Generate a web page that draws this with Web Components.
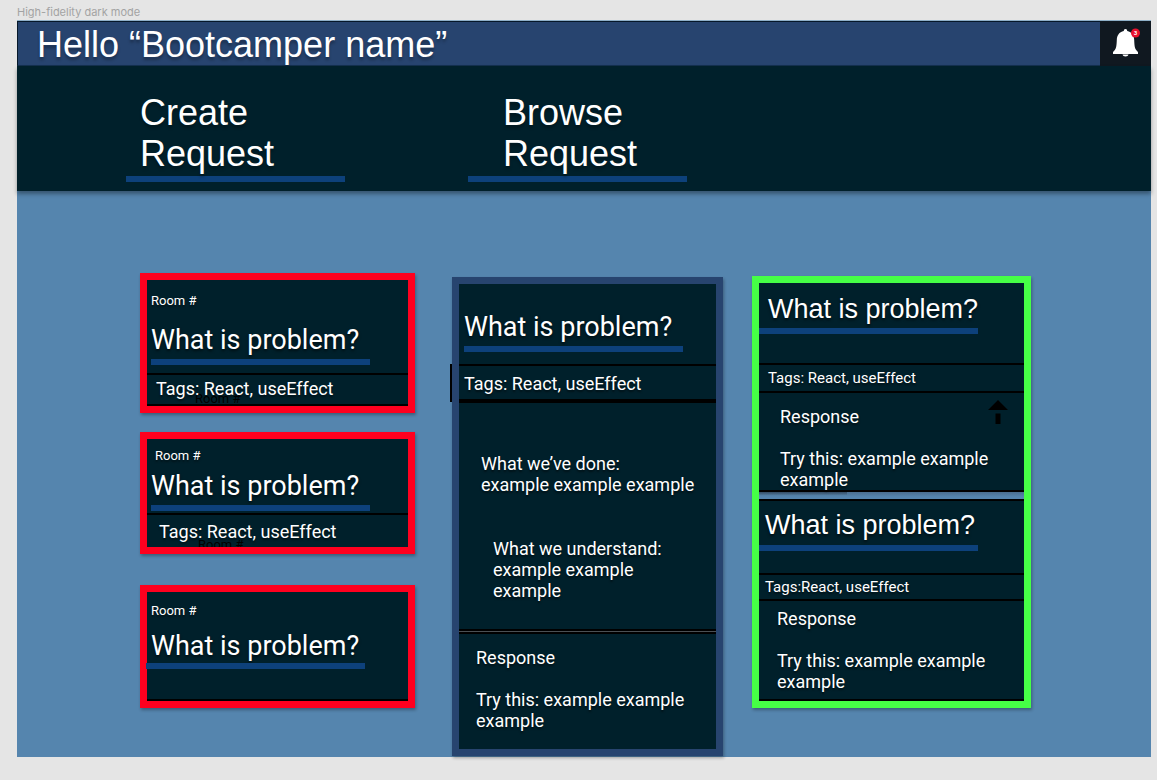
<!DOCTYPE html>
<html lang="en">
<head>
<meta charset="utf-8">
<meta name="viewport" content="width=device-width, initial-scale=1">
<title>High-fidelity dark mode</title>
<style>
  body { margin: 0; background: #e5e5e5; font-family: Roboto, sans-serif; color: #fff; }
</style>
</head>
<body>
<request-page></request-page>

<script>
const define = (name, html) => {
  const template = document.createElement('template');
  template.innerHTML = html;
  customElements.define(name, class extends HTMLElement {
    constructor() {
      super();
      this.attachShadow({ mode: 'open' }).append(template.content.cloneNode(true));
    }
  });
};

/* Top bar: greeting and notification bell */
define('greeting-bar', `
  <style>
    :host { display: flex; justify-content: space-between; align-items: stretch; box-sizing: border-box;
      min-height: 46px; background: #27446f; border-top: 1px solid #8fb0c8; }
    h1 { flex: 1; margin: 0; padding: 3px 19px 0; font: 400 36px/40px "Liberation Sans", sans-serif;
      text-shadow: 0 3px 3px rgba(0,0,0,.3); border: 1px solid #06182a; border-right: 0; border-bottom-color: #14304f; }
    button { width: 51px; border: 0; padding: 0; background: #101820; display: block; }
    svg { display: block; width: 51px; height: 45px; }
    text { font: 700 6px Roboto, sans-serif; fill: #fff; text-anchor: middle; }
  </style>
  <h1><slot></slot></h1>
  <button type="button" aria-label="Notifications">
    <svg viewBox="0 0 51 45" aria-hidden="true">
      <path fill="#fff" d="M25.5 8c-1.200 0-1.700.7-1.700 2.100C19 11.200 17 14.500 16.800 19c-.2 5.500-.5 8-1.800 9.700-.7 1-2 1.800-2 2.600V33h25v-1.700c0-.8-1.300-1.600-2-2.600-1.300-1.700-1.600-4.200-1.800-9.700-.2-4.500-2.200-7.800-7-8.900C27.200 8.700 26.700 8 25.500 8z"/>
      <path fill="#fff" d="M22.500 33.500h6c-.3 1.300-1.400 2-3 2s-2.700-.7-3-2z"/>
      <circle cx="35.500" cy="12" r="4.500" fill="#e8112d"/>
      <text x="35.500" y="14">3</text>
    </svg>
  </button>`);

/* Navigation entry: two-line label over a bar */
define('nav-tab', `
  <style>
    :host { display: block; width: 219px; }
    a { display: block; color: inherit; text-decoration: none; font: 400 36px/41px "Liberation Sans", sans-serif;
      text-shadow: 0 3px 3px rgba(0,0,0,.3); border-bottom: 6px solid #0d417b; padding: 0 0 2px var(--indent, 14px); }
  </style>
  <a href="#"><slot></slot></a>`);

define('main-nav', `
  <style>
    :host { display: block; position: relative; background: #00202b; box-shadow: 0 3px 4px rgba(0,0,0,.35); }
    nav { display: flex; gap: 123px; padding: 26px 0 9px 109px; }
  </style>
  <nav><slot></slot></nav>`);

/* Coloured frame around a problem */
define('problem-card', `
  <style>
    :host { display: block; border: 7px solid var(--tone, #ff001f); background: #00202b;
      box-shadow: 1px 2px 3px rgba(0,0,0,.3); }
  </style>
  <slot></slot>`);

/* Room number, question and bar */
define('card-head', `
  <style>
    :host { display: block; padding: var(--head-pad, 13px 0 8px 4px); border-bottom: 2px solid #000; }
    ::slotted([slot=room]) { display: block; font-size: 13px; line-height: 16px; margin: 0 0 var(--room-gap, 15px) var(--room-indent, 0);
      text-shadow: 0 2px 2px rgba(0,0,0,.5); }
    h2 { margin: 0; padding-left: var(--title-indent, 0); font: 400 27px/32px var(--title-font, Roboto), sans-serif; white-space: nowrap;
      text-shadow: 0 2px 3px rgba(0,0,0,.6); }
    .bar { width: 219px; height: 6px; margin: var(--bar-gap, 3px) 0 0 var(--bar-shift, 0); position: relative; background: #0d417b; }
  </style>
  <slot name="room"></slot>
  <h2><slot></slot></h2>
  <div class="bar"></div>`);

define('card-tags', `
  <style>
    :host { display: block; position: relative; overflow: var(--tags-overflow, hidden); padding: var(--tags-pad, 3px 8px 5px 9px);
      border-bottom: var(--tags-line, 2px) solid #000; font-size: var(--tags-size, 18px); line-height: 21px; white-space: nowrap; }
    .tags { position: relative; text-shadow: 0 2px 2px rgba(0,0,0,.5); }
    ::slotted([slot=ghost]) { position: absolute; left: var(--ghost-x, 48px); top: var(--ghost-y, 16px); font-size: 13px; line-height: 16px; color: #000; }
  </style>
  <slot name="ghost"></slot>
  <div class="tags"><slot></slot></div>`);

define('card-note', `
  <style>
    :host { display: block; font-size: 18px; line-height: 21px; text-shadow: 0 2px 2px rgba(0,0,0,.5); }
    ::slotted(p) { margin: 0; }
  </style>
  <slot></slot>`);

define('vote-button', `
  <style>
    :host { display: block; }
    button { display: block; border: 0; padding: 0; background: none; }
    svg { display: block; width: 20px; height: 24px; }
  </style>
  <button type="button" aria-label="Upvote response">
    <svg viewBox="0 0 20 24" aria-hidden="true"><path d="M10 0 20 10H0zM7.500 13.500h5V24h-5z"/></svg>
  </button>`);

define('request-board', `
  <style>
    :host { display: grid; grid-template-columns: 275fr 271fr 279fr; column-gap: 33px; align-items: start;
      padding: 82px 120px 1px 123px; background: #5585ae; }
    p { margin: 0; }
    .mine { display: flex; flex-direction: column; }
    .second { --head-pad: 9px 0 2px 4px; --room-gap: 6px; --room-indent: 4px; --ghost-x: 51px; --ghost-y: 22px;
      --tags-pad: 6px 8px 5px 12px; --tags-line: 0px; margin-top: 19px; }
    .third { --head-pad: 11px 0 30px 4px; --room-gap: 11px; --bar-gap: 1px; --bar-shift: -5px; margin-top: 31px; }
    .detail { --tone: #27446f; --head-pad: 27px 0 12px 5px; --tags-pad: 7px 5px 5px; --tags-line: 4px; --tags-overflow: visible;
      margin: 4px -4px 0 4px; }
    .detail card-tags::before { content: ""; position: absolute; left: -9px; top: -2px; bottom: -3px; width: 2px; background: #000; }
    .done { padding: 50px 0 0 22px; }
    .understood { padding: 43px 0 28px 34px; }
    hr { height: 1px; margin: 0; border: solid #000; border-width: 2px 0; background: #4a5054; }
    .reply { padding: 13px 0 18px 17px; }
    .reply > p:last-child { margin-top: 21px; }
    .answers { --tone: #46ff46; --title-font: "Liberation Sans"; --tags-size: 15px; margin-top: 3px; }
    .answers .reply { padding: 7px 16px 0 21px; border-bottom: 2px solid #000; }
    .answers .top { display: flex; justify-content: space-between; align-items: flex-start; }
    .answers .top p { padding-top: 6px; }
    .one { --head-pad: 10px 0 29px 0; --title-indent: 9px; --tags-pad: 3px 9px 2px; }
    .two { --head-pad: 8px 0 22px 0; --title-indent: 6px; --bar-gap: 4px; --tags-pad: 2px 6px 1px; border-top: 2px solid #000; }
    .two .reply { padding: 7px 16px 7px 18px; }
    .gap { height: 7px; background: linear-gradient(rgba(0,0,0,.3), transparent 50%) 0 0 / 88px 100% no-repeat,
      linear-gradient(#4a6d8e, #5585ae 70%); }
  </style>

  <div class="mine">
    <problem-card>
      <card-head><span slot="room">Room #</span>What is problem?</card-head>
      <card-tags><span slot="ghost" aria-hidden="true">Room #</span>Tags: React, useEffect</card-tags>
    </problem-card>
    <problem-card class="second">
      <card-head><span slot="room">Room #</span>What is problem?</card-head>
      <card-tags><span slot="ghost" aria-hidden="true">Room #</span>Tags: React, useEffect</card-tags>
    </problem-card>
    <problem-card class="third">
      <card-head><span slot="room">Room #</span>What is problem?</card-head>
    </problem-card>
  </div>

  <problem-card class="detail">
    <card-head>What is problem?</card-head>
    <card-tags>Tags: React, useEffect</card-tags>
    <card-note class="done"><p>What we’ve done:<br>example example example</p></card-note>
    <card-note class="understood"><p>What we understand:<br>example example<br>example</p></card-note>
    <hr>
    <card-note class="reply"><p>Response</p><p>Try this: example example<br>example</p></card-note>
  </problem-card>

  <problem-card class="answers">
    <div class="one">
      <card-head>What is problem?</card-head>
      <card-tags>Tags: React, useEffect</card-tags>
      <card-note class="reply">
        <div class="top"><p>Response</p><vote-button></vote-button></div>
        <p>Try this: example example<br>example</p>
      </card-note>
    </div>
    <div class="gap"></div>
    <div class="two">
      <card-head>What is problem?</card-head>
      <card-tags>Tags:React, useEffect</card-tags>
      <card-note class="reply"><p>Response</p><p>Try this: example example<br>example</p></card-note>
    </div>
  </problem-card>`);

define('request-page', `
  <style>
    :host { display: block; padding: 4px 6px 23px 17px; }
    .label { font: 400 11px/16px Inter, sans-serif; color: #a3a3a3; }
  </style>
  <div class="label">High-fidelity dark mode</div>
  <main>
    <greeting-bar>Hello “Bootcamper name”</greeting-bar>
    <main-nav>
      <nav-tab>Create<br>Request</nav-tab>
      <nav-tab style="--indent: 35px">Browse<br>Request</nav-tab>
    </main-nav>
    <request-board></request-board>
  </main>`);
</script>
</body>
</html>
